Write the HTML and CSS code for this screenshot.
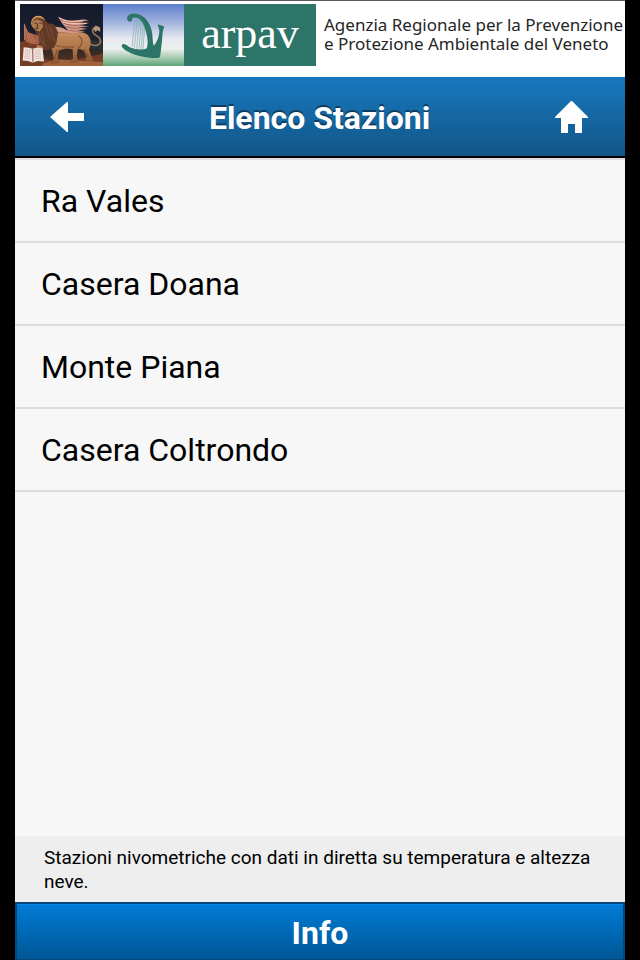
FILE: index.html
```html
<!DOCTYPE html>
<html lang="it">
<head>
<meta charset="utf-8">
<meta name="viewport" content="width=device-width, initial-scale=1">
<title>Elenco Stazioni</title>
<link rel="stylesheet" href="styles.css">
</head>
<body>
<div class="app">
  <div class="brand">
    <div class="logo">
      <svg class="logo-lion" viewBox="30 12 249 184" preserveAspectRatio="none" aria-hidden="true">
        <defs>
          <linearGradient id="night" x1="0" y1="0" x2="0" y2="1">
            <stop offset="0" stop-color="#151a2b"/><stop offset=".5" stop-color="#1b2030"/><stop offset=".7" stop-color="#2c2624"/><stop offset="1" stop-color="#5c3423"/>
          </linearGradient>
          <linearGradient id="fur" x1="0" y1="0" x2="0" y2="1">
            <stop offset="0" stop-color="#c08a5c"/><stop offset=".5" stop-color="#b0754a"/><stop offset="1" stop-color="#8a5030"/>
          </linearGradient>
        </defs>
        <rect x="30" y="12" width="249" height="184" fill="url(#night)"/>
        <path d="M30 124 58 120 90 134 100 174 150 186 279 160V196H30Z" fill="#743d25"/>
        <path d="M100 188 140 176 279 184V196H96Z" fill="#a0623a"/>
        <path d="M220 118 279 124V150L232 140Z" fill="#26303a"/>
        <path d="M134 96C118 92 116 82 132 80 154 78 164 88 176 92 164 78 152 66 144 49 160 58 180 66 204 60 214 58 224 56 236 60L206 67 240 68 208 75 238 78 206 82 232 86 204 90 226 95 196 99Z" fill="#d39c8a"/>
        <path d="M150 57C166 68 188 70 212 66M160 68C178 78 200 76 222 73M168 79C184 86 204 84 220 82M178 90C194 94 208 92 218 92" fill="none" stroke="#8c4c46" stroke-width="2"/>
        <path d="M148 53C166 64 190 66 218 60M158 64C178 73 200 71 230 70" fill="none" stroke="#f2c4b3" stroke-width="3"/>
        <path d="M238 130C260 142 276 130 270 116 266 104 250 106 248 94 246 84 258 76 268 86" fill="none" stroke="#9b7355" stroke-width="5"/>
        <path d="M250 84 257 76 270 82 271 94 262 90 256 95Z" fill="#b39878"/>
        <path d="M122 104C150 90 174 102 208 97 232 96 244 110 242 132L237 146 244 168 250 180 230 184 226 176 231 170 220 150 204 144 200 164 204 184 182 188 180 180 189 174 188 146 168 144 146 150 143 174 148 186 124 190 122 182 132 176 126 148 96 128Z" fill="url(#fur)"/>
        <path d="M136 134C158 144 176 138 192 140M205 106C220 114 218 130 207 143M222 146 235 168M142 148 135 172" fill="none" stroke="#7c4a2c" stroke-width="3"/>
        <path d="M148 103C172 111 196 99 218 104" fill="none" stroke="#c88c5d" stroke-width="4"/>
        <circle cx="85" cy="68" r="20" fill="#a86c42" stroke="#e0ad5c" stroke-width="3"/>
        <path d="M68 64 78 54 98 56 116 70 132 72 144 96 140 124 132 142 112 150 96 146 84 126 77 94 68 78Z" fill="#603a26"/>
        <path d="M69 65 80 57 96 63 99 79 89 94 76 89 67 78Z" fill="#b07a50"/>
        <path d="M74 69H80M88 69H94M82 70V81M76 85 86 83" fill="none" stroke="#40251c" stroke-width="3"/>
        <path d="M104 74C118 88 110 104 124 116M94 94C102 108 96 122 108 140M116 78C134 94 122 112 136 124M88 98C91 116 90 124 100 134" fill="none" stroke="#7d4e31" stroke-width="3"/>
        <path d="M42 69C52 82 48 95 62 98L86 106 88 130C72 134 52 130 42 118Z" fill="#a75e46"/>
        <path d="M43 72 45 118M49 86 56 122M56 98 66 127M64 102 75 128" fill="none" stroke="#c07a5e" stroke-width="3"/>
        <path d="M80 132 98 138 100 148 84 146Z" fill="#ba7a4d"/>
        <path d="M38 180 41 140 56 142 68 145 82 141 98 144 102 183 82 181 69 186 54 181Z" fill="#efe2dd"/>
        <path d="M68 145 69 185" stroke="#805653" stroke-width="3"/>
        <path d="M46 149H62M45 155H60M45 161H62M44 167H59M44 173H61M75 149H92M76 155H91M76 161H94M77 167H92M77 173H94" stroke="#c99a96" stroke-width="2" stroke-dasharray="4 2"/>
      </svg>
      <svg class="logo-harp" viewBox="9 12 243 184" preserveAspectRatio="none" aria-hidden="true">
        <defs>
          <linearGradient id="sky" x1="0" y1="0" x2="0" y2="1">
            <stop offset="0" stop-color="#5b7fcd"/><stop offset=".28" stop-color="#9db0dc"/><stop offset=".55" stop-color="#e6e8f0"/><stop offset=".72" stop-color="#edf0ed"/><stop offset=".87" stop-color="#a5caae"/><stop offset="1" stop-color="#5fa276"/>
          </linearGradient>
        </defs>
        <rect x="9" y="12" width="243" height="184" fill="url(#sky)"/>
        <path d="M105 56 96 140M112 56 103 143M118 58 110 145M124 63 117 146M130 69 123 147M134 78 129 147" fill="none" stroke="#7da8ab" stroke-width="2"/>
        <path d="M96 58C97 66 85 67 82 59 78 48 89 39 104 40 127 41 146 60 154 86 159 106 157 122 161 136 170 128 178 109 178 91L173 72 193 79C185 99 188 116 184 139 182 153 182 162 179 171 157 176 112 169 85 154 72 147 60 137 67 132 76 128 82 138 91 141 107 147 126 149 140 144 146 130 142 105 135 84 128 63 117 52 105 52 99 52 96 54 96 58Z" fill="#2d7568"/>
      </svg>
      <span class="logo-name">arpav</span>
    </div>
    <p class="agency">Agenzia Regionale per la Prevenzione<br>e Protezione Ambientale del Veneto</p>
  </div>

  <header class="bar">
    <a class="bar-link" href="#indietro" aria-label="Indietro">
      <svg width="34" height="30" viewBox="0 0 34 30" aria-hidden="true"><path d="M0 15 17 0H18V11H34V19H18V30H17Z" fill="#fff"/></svg>
    </a>
    <h1>Elenco Stazioni</h1>
    <a class="bar-link" href="#home" aria-label="Home">
      <svg width="33" height="32" viewBox="0 0 33 32" aria-hidden="true"><path d="M16 0H17L33 16V17H27V32H20V23H13V32H6V17H0V16Z" fill="#fff"/></svg>
    </a>
  </header>

  <main>
    <ul class="stations">
      <li><a href="#ra-vales">Ra Vales</a></li>
      <li><a href="#casera-doana">Casera Doana</a></li>
      <li><a href="#monte-piana">Monte Piana</a></li>
      <li><a href="#casera-coltrondo">Casera Coltrondo</a></li>
    </ul>
  </main>

  <p class="note">Stazioni nivometriche con dati in diretta su temperatura e altezza neve.</p>
  <button class="info" type="button">Info</button>
</div>
</body>
</html>
```
FILE: styles.css
```css
* {
  box-sizing: border-box;
}

body {
  margin: 0;
  background: #000;
  color: #000;
  font-family: Roboto, "Liberation Sans", sans-serif;
}

.app {
  display: flex;
  flex-direction: column;
  min-height: 100vh;
  margin: 0 15px;
  background: #f7f7f7;
}

.brand {
  display: flex;
  gap: 8px;
  padding: 3px 0 11px 5px;
  border-top: 1px solid #5a565b;
  background: #fff;
}

.logo {
  display: flex;
  flex: none;
  height: 62px;
}

.logo-lion {
  width: 83px;
  height: 62px;
}

.logo-harp {
  width: 81px;
  height: 62px;
}

.logo-name {
  width: 132px;
  background: #2d7568;
  color: #fff;
  font: 44px/60px "Liberation Serif", serif;
  text-align: center;
}

.agency {
  margin: 0;
  padding-top: 11px;
  color: #252525;
  font: 17px/19px "Noto Sans", sans-serif;
  white-space: nowrap;
}

.bar {
  display: flex;
  align-items: center;
  justify-content: space-between;
  height: 81px;
  padding: 0 37px 0 35px;
  border-bottom: 2px solid #000;
  background: linear-gradient(#1878be, #125688);
}

.bar-link {
  display: flex;
}

.bar h1 {
  margin: 0;
  padding-top: 2px;
  color: #fff;
  font-size: 32px;
  font-weight: 700;
  line-height: 40px;
  text-shadow: 0 -2px #0f3d62;
}

main {
  flex: 1;
}

.stations {
  margin: 0;
  padding: 0;
  border-top: 2px solid #ddd;
  list-style: none;
}

.stations li {
  border-bottom: 2px solid #ddd;
}

.stations a {
  display: block;
  padding: 21px 26px 20px;
  color: #000;
  font-size: 32px;
  line-height: 40px;
  text-decoration: none;
}

.note {
  margin: 0;
  padding: 10px 29px 8px;
  background: #eee;
  font-size: 19px;
  line-height: 24px;
}

.info {
  height: 58px;
  padding: 2px 0 0;
  border: 2px solid #034778;
  border-bottom-width: 1px;
  background: linear-gradient(#007cd6, #005696);
  box-shadow: inset 0 1px #0586e4;
  color: #fff;
  font: 700 32px/40px Roboto, "Liberation Sans", sans-serif;
}
```
